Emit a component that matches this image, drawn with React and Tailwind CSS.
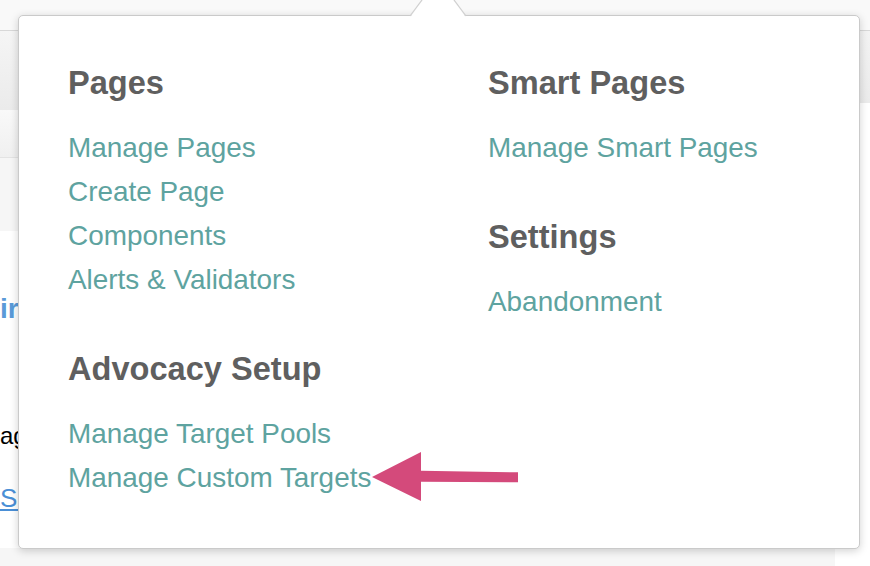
const leftSections = [
  {
    title: 'Pages',
    links: ['Manage Pages', 'Create Page', 'Components', 'Alerts & Validators'],
  },
  {
    title: 'Advocacy Setup',
    links: ['Manage Target Pools', 'Manage Custom Targets'],
  },
]

const rightSections = [
  { title: 'Smart Pages', links: ['Manage Smart Pages'] },
  { title: 'Settings', links: ['Abandonment'] },
]

function MenuColumn({ sections }) {
  return (
    <div className="flex flex-col gap-[47px]">
      {sections.map((s) => (
        <div key={s.title}>
          <h3 className="mb-[23px] text-[32.6px] font-bold leading-[40px] text-[#5f5f5f]">
            {s.title}
          </h3>
          <ul>
            {s.links.map((l) => (
              <li key={l}>
                <a href="#" className="block text-[27.9px] leading-[44px] text-[#5ea3a0]">
                  {l}
                </a>
              </li>
            ))}
          </ul>
        </div>
      ))}
    </div>
  )
}

export default function App() {
  return (
    <div className="relative h-[566px] w-[870px] overflow-hidden bg-white font-['Liberation_Sans',Arial,sans-serif]">
      {/* page underneath the menu */}
      <div className="h-[31px] border-b border-[#d8d8d8] bg-[#f9f9f9]" />
      <div className="flex">
        <div className="w-[835px]">
          <div className="h-[79px] bg-gradient-to-b from-[#f5f5f5] to-[#ebebeb]" />
          <div className="h-[48px] border-b border-[#e3e3e3] bg-gradient-to-b from-[#f9f9f9] to-[#f0f0f0]" />
          <div className="h-[73px] bg-[#f6f6f6]" />
          <div className="pt-[62px]">
            <p className="text-[28px] font-bold leading-[32px] text-[#5a9ad8]">ir</p>
            <p className="mt-[96px] text-[24px] leading-[30px] text-black">ag</p>
            <a href="#" className="mt-[32px] block text-[26px] leading-[30px] text-[#4a8fd6] underline">
              Su
            </a>
          </div>
          <div className="mt-[35px] h-[30px] bg-[#f6f6f6]" />
        </div>
        <div className="h-[72px] flex-1 bg-gradient-to-b from-[#f3f3f3] to-[#ebebeb]" />
      </div>

      {/* dropdown menu */}
      <div className="absolute left-[18px] top-[15px] h-[534px] w-[842px] rounded-[5px] border border-[#cacaca] bg-white shadow-[0_2px_8px_rgba(0,0,0,0.18)]">
        <svg className="absolute left-[390px] top-[-16px]" width="60" height="17" viewBox="0 0 60 17">
          <polygon points="2,16 14,0 44,0 56,16" fill="white" />
          <polyline points="1,16 13,0" stroke="#cfcfcf" strokeWidth="1.2" fill="none" />
          <polyline points="45,0 57,16" stroke="#cfcfcf" strokeWidth="1.2" fill="none" />
        </svg>
        <div className="grid grid-cols-[420px_1fr] pl-[49px] pt-[47px]">
          <MenuColumn sections={leftSections} />
          <MenuColumn sections={rightSections} />
        </div>
      </div>

      {/* annotation arrow */}
      <svg className="absolute left-[360px] top-[440px]" width="170" height="70" viewBox="0 0 170 70">
        <polygon
          points="12,37 61,12 61,30.7 158,32.3 158,42.3 61,41.7 61,61"
          fill="#d44a7b"
        />
      </svg>
    </div>
  )
}
